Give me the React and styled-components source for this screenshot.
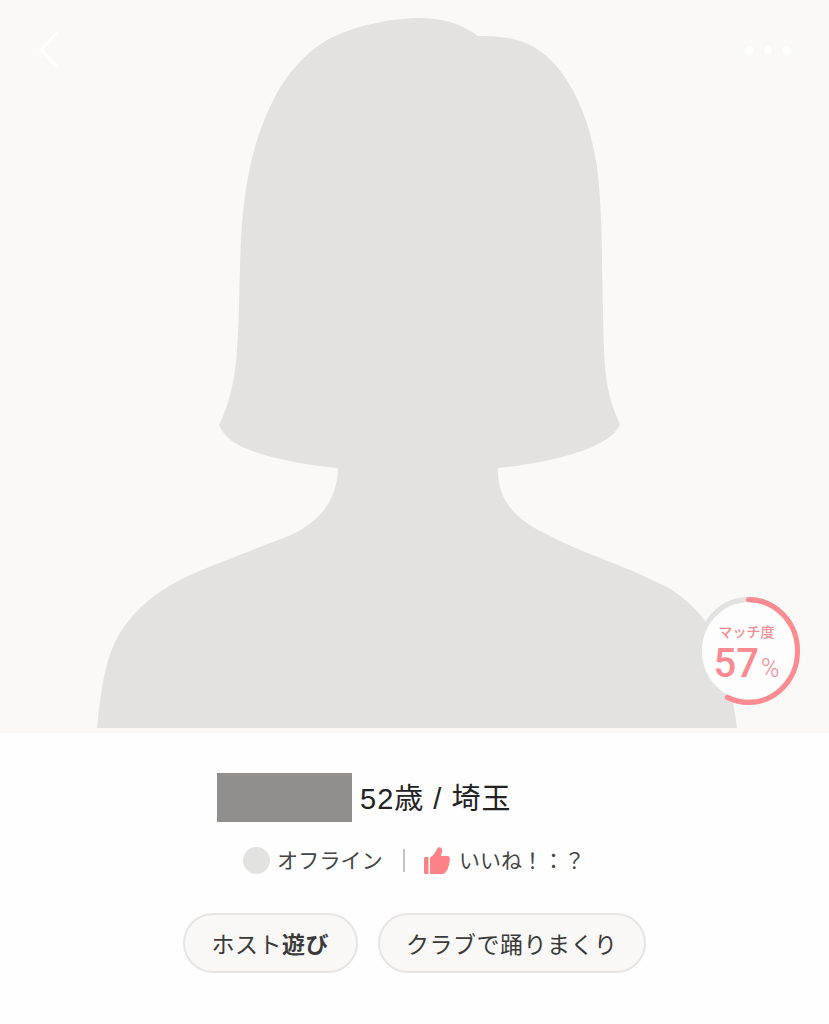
import React from 'react'
import styled, { createGlobalStyle } from 'styled-components'

const SILHOUETTE =
  'M420 18 C443 18 462 24 478 36 C495 36 512 37 526 43 C546 52 558 66 568 82 C584 108 592 135 597 167 C601 200 602 235 602 267 C603 295 603 325 604 350 C605 375 608 400 620 424 C617 433 606 441 590 448 C565 458 530 465 498 468 C497 500 515 518 542 532 C556 539 570 546 585 552 C602 559 619 565 635 572 C650 579 662 584 672 590 C684 598 694 607 702 617 C718 637 730 670 737 728 L97 728 C102 680 107 648 127 623 C143 601 165 587 190 575 C212 565 235 557 257 548 C275 541 290 536 297 532 C315 522 337 505 338 468 C318 466 302 464 285 460 C270 457 257 453 245 448 C236 445 224 437 219 425 C226 412 235 385 237 350 C239 325 239 295 240 267 C241 225 244 195 250 167 C256 140 264 117 277 93 C292 67 312 47 333 37 C360 24 395 18 420 18 Z'

const MATCH_PERCENT = 57
const RING_RADIUS = 49.5
const RING_LENGTH = 2 * Math.PI * RING_RADIUS

export default function App() {
  return (
    <Page>
      <GlobalStyle />
      <Photo>
        <Silhouette viewBox="0 0 829 733">
          <path d={SILHOUETTE} fill="#e3e2e1" />
        </Silhouette>
        <BackIcon viewBox="0 0 22 38">
          <path d="M19 2 L3 19 L19 36" fill="none" stroke="#fff" strokeWidth="3" />
        </BackIcon>
        <Dots>
          <Dot />
          <Dot />
          <Dot />
        </Dots>
        <Match>
          <MatchRing viewBox="0 0 104 104" preserveAspectRatio="none">
            <circle cx="52" cy="52" r="50" fill="#fdfdfd" />
            <circle cx="52" cy="52" r={RING_RADIUS} fill="none" stroke="#e2e2e0" strokeWidth="5" />
            <circle
              cx="52"
              cy="52"
              r={RING_RADIUS}
              fill="none"
              stroke="#fd8b90"
              strokeWidth="5"
              strokeLinecap="round"
              strokeDasharray={`${(RING_LENGTH * MATCH_PERCENT) / 100} ${RING_LENGTH}`}
              transform="rotate(-90 52 52)"
            />
          </MatchRing>
          <MatchLabel>マッチ度</MatchLabel>
          <MatchValue>
            {MATCH_PERCENT}
            <MatchUnit>%</MatchUnit>
          </MatchValue>
        </Match>
      </Photo>

      <Info>
        <NameRow>
          <Redacted />
          <Profile>52歳 / 埼玉</Profile>
        </NameRow>
        <StatusRow>
          <OnlineDot />
          <StatusText>オフライン</StatusText>
          <Divider />
          <ThumbIcon viewBox="0 0 26 27">
            <path
              d="M1.5 10 H4.5 V27 H1.5 C0.6 27 0 26.4 0 25.5 V11.5 C0 10.6 0.6 10 1.5 10 Z M6 10.5 C9.5 8.5 11.5 5 13 2 C13.6 0.5 15 -0.2 16.5 0.5 C18.5 1.5 18.5 4 17.5 7 L17 9 H23.5 C25.5 9 26.3 11 25.6 12.6 C26.2 14 25.8 15.4 24.9 16.3 C25.4 17.8 24.9 19.2 23.8 20 C24.2 21.5 23.7 23 22.4 24 C21.5 26 20 27 18 27 H6 Z"
              fill="#fd8288"
            />
          </ThumbIcon>
          <LikeText>いいね！：？</LikeText>
        </StatusRow>
        <Tags>
          <Tag>
            ホスト<strong>遊び</strong>
          </Tag>
          <Tag>クラブで踊りまくり</Tag>
        </Tags>
      </Info>
    </Page>
  )
}

const GlobalStyle = createGlobalStyle`
  html, body {
    margin: 0;
    padding: 0;
    background: #fefefe;
  }
`

const Page = styled.div`
  width: 829px;
  height: 1024px;
  overflow: hidden;
  font-family: "Liberation Sans", "Noto Sans CJK JP", sans-serif;
  color: #333;
`

const Photo = styled.div`
  position: relative;
  height: 733px;
  background: #faf9f8;
`

const Silhouette = styled.svg`
  display: block;
  width: 829px;
  height: 733px;
`

const BackIcon = styled.svg`
  position: absolute;
  top: 31px;
  left: 38px;
  width: 22px;
  height: 38px;
`

const Dots = styled.div`
  position: absolute;
  top: 46px;
  left: 745px;
  display: flex;
  gap: 11px;
`

const Dot = styled.span`
  width: 8px;
  height: 9px;
  border-radius: 50%;
  background: #fff;
`

const Match = styled.div`
  position: absolute;
  top: 597px;
  left: 697px;
  box-sizing: border-box;
  width: 103px;
  height: 108px;
  padding-right: 4px;
  display: flex;
  flex-direction: column;
  align-items: center;
  color: #f98a90;
`

const MatchRing = styled.svg`
  position: absolute;
  top: 0;
  left: 0;
  width: 103px;
  height: 108px;
`

const MatchLabel = styled.div`
  position: relative;
  margin-top: 26px;
  font-size: 14px;
  line-height: 18px;
  font-weight: 500;
`

const MatchValue = styled.div`
  position: relative;
  margin-top: 2px;
  font-family: "Roboto", "Liberation Sans", sans-serif;
  font-size: 40px;
  line-height: 42px;
  font-weight: 500;
  white-space: nowrap;
`

const MatchUnit = styled.span`
  margin-left: 2px;
  font-size: 25px;
  font-weight: 300;
`

const Info = styled.div`
  display: flex;
  flex-direction: column;
`

const NameRow = styled.div`
  display: flex;
  align-items: center;
  gap: 8px;
  margin-top: 40px;
  padding-left: 217px;
`

const Redacted = styled.div`
  width: 135px;
  height: 49px;
  background: #918f8e;
`

const Profile = styled.div`
  padding-top: 3px;
  font-size: 29px;
  line-height: 46px;
  letter-spacing: 1px;
  color: #222;
  white-space: nowrap;
`

const StatusRow = styled.div`
  display: flex;
  align-items: center;
  height: 27px;
  margin-top: 25px;
  padding-left: 243px;
  font-size: 21px;
  color: #444;
`

const OnlineDot = styled.span`
  width: 27px;
  height: 27px;
  border-radius: 50%;
  background: #e2e2e0;
`

const StatusText = styled.span`
  margin-left: 7px;
  line-height: 25px;
  letter-spacing: 0.2px;
  white-space: nowrap;
`

const Divider = styled.span`
  width: 2px;
  height: 23px;
  margin: 0 19px 0 20px;
  background: #c4c2c0;
`

const ThumbIcon = styled.svg`
  width: 26px;
  height: 27px;
`

const LikeText = styled.span`
  margin-left: 9px;
  line-height: 25px;
  white-space: nowrap;
`

const Tags = styled.div`
  display: flex;
  justify-content: center;
  gap: 20px;
  margin-top: 39px;
`

const Tag = styled.div`
  box-sizing: border-box;
  height: 60px;
  padding: 0 26.5px;
  display: flex;
  align-items: center;
  border: 2px solid #e8e4e4;
  border-radius: 30px;
  background: #f9f8f7;
  font-size: 23px;
  letter-spacing: 0.5px;
  color: #3a3a3a;
  white-space: nowrap;

  strong {
    font-weight: 700;
  }
`
